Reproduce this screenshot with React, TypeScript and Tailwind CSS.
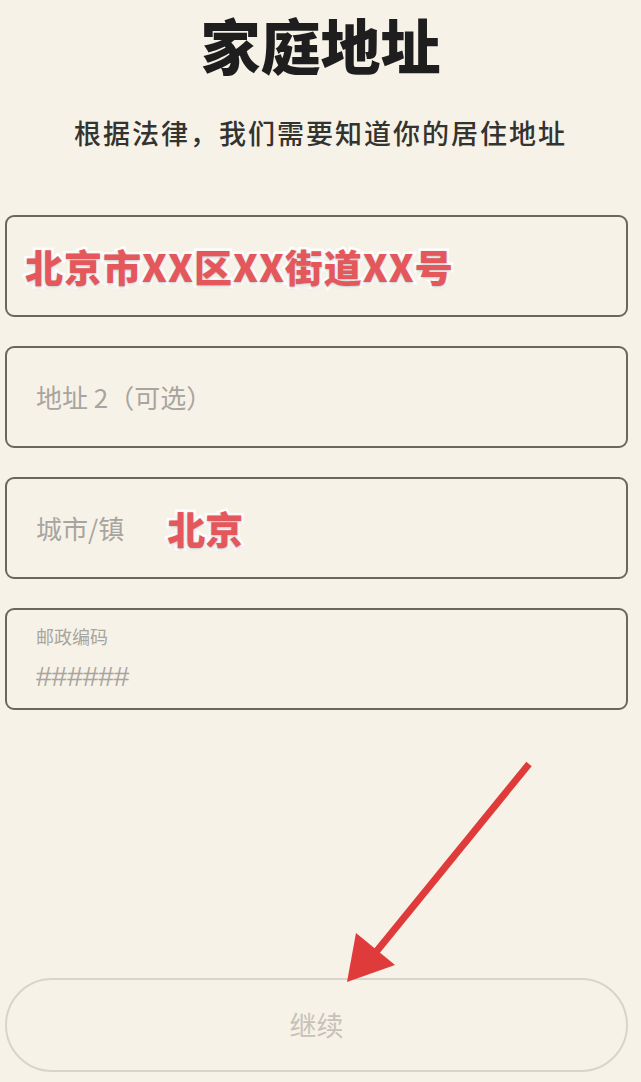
import React from "react";

const cjk = "font-['Noto_Sans_CJK_SC','Noto_Sans',sans-serif]";
const redMark =
  "font-black text-[#e4575b] [-webkit-text-stroke:5px_#ffffff] [paint-order:stroke_fill] [text-shadow:0_1px_3px_rgba(0,0,0,0.25)]";

function Field({ children }: { children: React.ReactNode }) {
  return (
    <div className="flex h-[102px] items-center rounded-[9px] border-2 border-[#6a675e] px-[29px]">
      {children}
    </div>
  );
}

function Arrow() {
  return (
    <svg
      className="pointer-events-none absolute left-0 top-0"
      width="641"
      height="1082"
      viewBox="0 0 641 1082"
      aria-hidden
    >
      <line x1="529" y1="764" x2="376" y2="952" stroke="#e03b3b" strokeWidth="7" />
      <polygon points="347,982 356,933 395,965" fill="#e03b3b" />
    </svg>
  );
}

export default function App() {
  return (
    <div className={`relative flex min-h-[1082px] flex-col bg-[#f7f2e8] px-[5px] ${cjk}`}>
      {/* Header */}
      <h1 className="pt-[14px] text-center text-[60px] font-black leading-none text-[#1e1e1e]">
        家庭地址
      </h1>
      <p className="mt-[45px] text-center text-[27px] font-medium leading-none tracking-[2px] text-[#333330]">
        根据法律，我们需要知道你的居住地址
      </p>

      {/* Form */}
      <div className="mr-[8px] mt-[69px] flex flex-col gap-[29px]">
        <Field>
          <span className={`-ml-[11px] text-[38px] leading-none tracking-[1px] ${redMark}`}>
            北京市XX区XX街道XX号
          </span>
        </Field>
        <Field>
          <span className="text-[26px] leading-none text-[#a8a59e]">地址 2（可选）</span>
        </Field>
        <Field>
          <span className="text-[26px] leading-none text-[#a8a59e]">城市/镇</span>
          <span className={`ml-[43px] text-[38px] leading-none ${redMark}`}>北京</span>
        </Field>
        <div className="flex h-[102px] flex-col justify-center rounded-[9px] border-2 border-[#6a675e] px-[29px]">
          <span className="text-[18px] leading-none text-[#a8a59e]">邮政编码</span>
          <span className="mt-[18px] font-['Liberation_Sans',sans-serif] text-[28px] leading-none text-[#a8a59e]">
            ######
          </span>
        </div>
      </div>

      {/* Continue */}
      <div className="mt-auto pb-[10px]">
        <button className="flex h-[94px] w-[623px] items-center justify-center rounded-full border-2 border-[#d8d4cb] text-[27px] text-[#c6c2ba]">
          继续
        </button>
      </div>

      <Arrow />
    </div>
  );
}
